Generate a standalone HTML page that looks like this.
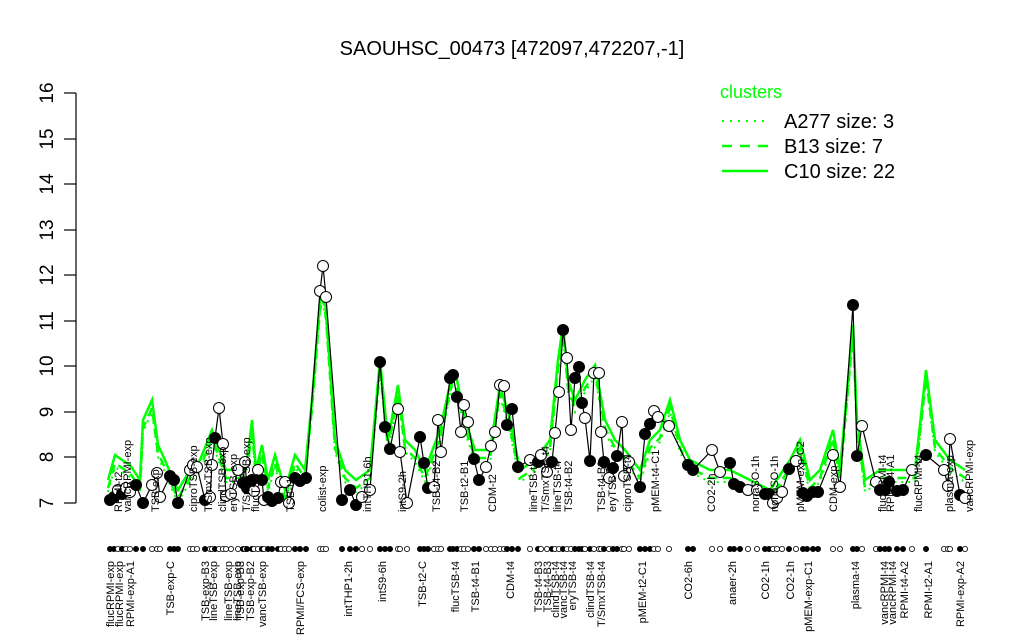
<!DOCTYPE html>
<html><head><meta charset="utf-8"><style>
html,body{margin:0;padding:0;background:#fff;}
svg{display:block;font-family:"Liberation Sans",sans-serif;}
</style></head><body>
<svg id="s" width="1024" height="640" viewBox="0 0 1024 640" xmlns="http://www.w3.org/2000/svg">
<text x="512" y="55" font-size="20" text-anchor="middle">SAOUHSC_00473 [472097,472207,-1]</text>
<g stroke="#000" stroke-width="1.2">
<line x1="76" y1="93" x2="76" y2="503"/>
<line x1="64" y1="93" x2="76" y2="93"/><line x1="64" y1="139" x2="76" y2="139"/><line x1="64" y1="184" x2="76" y2="184"/><line x1="64" y1="230" x2="76" y2="230"/><line x1="64" y1="275" x2="76" y2="275"/><line x1="64" y1="321" x2="76" y2="321"/><line x1="64" y1="366" x2="76" y2="366"/><line x1="64" y1="412" x2="76" y2="412"/><line x1="64" y1="457" x2="76" y2="457"/><line x1="64" y1="503" x2="76" y2="503"/>
</g>
<g font-size="19" text-anchor="middle">
<text transform="translate(46,93) rotate(-90)" dy="7">16</text>
<text transform="translate(46,139) rotate(-90)" dy="7">15</text>
<text transform="translate(46,184) rotate(-90)" dy="7">14</text>
<text transform="translate(46,230) rotate(-90)" dy="7">13</text>
<text transform="translate(46,275) rotate(-90)" dy="7">12</text>
<text transform="translate(46,321) rotate(-90)" dy="7">11</text>
<text transform="translate(46,366) rotate(-90)" dy="7">10</text>
<text transform="translate(46,412) rotate(-90)" dy="7">9</text>
<text transform="translate(46,457) rotate(-90)" dy="7">8</text>
<text transform="translate(46,503) rotate(-90)" dy="7">7</text>
</g>
<g id="g"></g>
<g fill="#0f0" font-size="20">
<text x="720" y="98" font-size="18">clusters</text>
<line x1="722" y1="121" x2="768" y2="121" stroke="#0f0" stroke-width="2" stroke-dasharray="2,6"/>
<line x1="722" y1="146" x2="768" y2="146" stroke="#0f0" stroke-width="2.5" stroke-dasharray="10,8"/>
<line x1="722" y1="171" x2="768" y2="171" stroke="#0f0" stroke-width="2.5"/>
<text x="784" y="128" fill="#000">A277 size: 3</text>
<text x="784" y="153" fill="#000">B13 size: 7</text>
<text x="784" y="178" fill="#000">C10 size: 22</text>
</g>
</svg>
<script>
var B="110,500,1;114,497,1;118,490,0;122,494,1;126,488,0;130,492,0;136,485,1;143,503,1;152,485,0;157,473,0;160,497,0;170,476,1;174,480,1;178,503,1;190,470,0;193,465,0;197,467,0;205,500,1;210,497,0;212,465,0;215,438,1;219,408,0;223,444,0;226,496,0;231,494,0;238,470,0;243,483,1;245,462,0;247,488,1;252,480,1;254,491,0;258,470,0;262,480,1;264,500,0;268,497,1;272,501,1;278,498,1;281,482,0;285,482,0;289,503,0;295,478,1;300,481,1;306,478,1;320,291,0;323,266,0;326,297,0;342,500,1;350,490,1;356,505,1;362,497,0;370,490,0;380,362,1;385,427,1;390,449,1;398,409,0;400,452,0;407,503,0;420,437,1;424,463,1;428,488,1;434,487,0;438,420,0;441,452,0;450,378,1;453,375,1;457,397,1;461,432,0;464,405,0;468,422,0;474,459,1;479,480,1;486,467,0;491,446,0;495,432,0;500,385,0;504,386,0;507,425,1;512,409,1;518,467,1;530,460,0;538,462,1;541,455,0;547,472,0;552,462,1;555,433,0;559,392,0;563,330,1;567,358,0;571,430,0;575,378,1;579,367,1;582,403,1;585,418,0;590,461,1;594,373,0;599,373,0;601,432,0;604,462,1;609,478,0;613,468,1;617,456,1;622,422,0;624,476,0;629,462,0;640,487,1;645,434,1;650,424,1;654,411,0;658,417,0;669,426,0;688,465,1;693,470,1;712,450,0;720,472,0;730,463,1;734,484,1;740,487,1;748,490,0;757,490,0;765,494,1;769,494,1;773,503,0;777,498,0;782,492,0;789,469,1;796,461,0;803,493,1;807,496,1;813,492,1;818,492,1;833,455,0;840,487,0;853,305,1;857,456,1;862,426,0;876,482,0;880,490,1;885,490,1;889,482,1;897,491,1;903,490,1;912,470,0;926,455,1;944,470,0;948,486,0;950,439,0;960,495,1;965,498,0".split(";").map(function(s){return s.split(",").map(Number)});
var G="108,480;115,455;122,460;130,465;140,480;143,420;152,400;158,445;165,460;173,480;178,490;190,470;200,460;212,430;219,450;226,470;240,470;248,455;252,420;256,470;262,445;268,480;275,455;285,490;295,455;305,470;312,400;320,300;323,290;326,310;335,440;345,470;356,480;370,470;380,360;388,440;398,385;405,440;415,450;425,470;440,430;452,375;457,380;465,420;475,450;490,450;500,385;510,420;520,470;535,460;550,440;558,360;563,325;568,380;575,400;585,380;595,365;605,420;615,440;625,450;640,470;650,440;660,430;670,400;680,440;690,460;710,470;730,470;750,480;770,490;790,460;800,440;810,480;820,470;833,430;840,470;853,325;857,420;865,480;880,470;900,470;915,470;926,370;935,440;950,460;965,470";
var g=document.getElementById("g"),h="";
function sh(p,dy){return p.split(";").map(function(s){var a=s.split(",");return a[0]+","+Math.min(505,(+a[1]+dy))}).join(" ")}
h+='<polyline points="'+sh(G,12)+'" fill="none" stroke="#0f0" stroke-width="2" stroke-dasharray="2,5"/>';
h+='<polyline points="'+sh(G,8)+'" fill="none" stroke="#0f0" stroke-width="2.5" stroke-dasharray="9,6"/>';
h+='<polyline points="'+sh(G,0)+'" fill="none" stroke="#0f0" stroke-width="2.5"/>';
h+='<polyline points="'+B.map(function(p){return p[0]+","+p[1]}).join(" ")+'" fill="none" stroke="#000" stroke-width="1.2"/>';
B.forEach(function(p){h+='<circle cx="'+p[0]+'" cy="'+p[1]+'" r="5.5" fill="'+(p[2]?"#000":"#fff")+'" stroke="#000" stroke-width="1"/>';
h+='<circle cx="'+p[0]+'" cy="549" r="2.6" fill="'+(p[2]?"#000":"#fff")+'" stroke="#000" stroke-width="0.8"/>';});
var L=[[110,"flucRPMI-exp"],[119,"flucRPMI-exp"],[130,"RPMI-exp-A1"],[170,"TSB-exp-C"],[205,"TSB-exp-B3"],[213,"lineTSB-exp"],[228,"lineTSB-exp"],[237,"lineTSB-exp"],[240,"TSB-exp-B3"],[250,"TSB-exp-B2"],[262,"vancTSB-exp"],[300,"RPMI/FCS-exp"],[348,"intTHP1-2h"],[382,"intS9-6h"],[422,"TSB-t2-C"],[455,"flucTSB-t4"],[475,"TSB-t4-B1"],[510,"CDM-t4"],[538,"TSB-t4-B3"],[547,"TSB-t4-B3"],[555,"clindTSB-t4"],[563,"vancTSB-t4"],[572,"eryTSB-t4"],[590,"clindTSB-t4"],[601,"T/SmxTSB-t4"],[642,"pMEM-t2-C1"],[688,"CO2-6h"],[732,"anaer-2h"],[765,"CO2-1h"],[790,"CO2-1h"],[808,"pMEM-exp-C1"],[855,"plasma-t4"],[884,"vancRPMI-t4"],[892,"vancRPMI-t4"],[904,"RPMI-t4-A2"],[928,"RPMI-t2-A1"],[960,"RPMI-exp-A2"]];
L.forEach(function(l){h+='<text transform="translate('+(l[0]+4)+',561) rotate(-90)" font-size="11" text-anchor="end">'+l[1]+'</text>';});
var I=[[118,"RPMI-t2"],[127,"vancRPMI-exp"],[155,"TSB-exp"],[193,"ciproTSB-exp"],[208,"T/SmxTSB-exp"],[222,"clindTSB-exp"],[233,"eryTSB-exp"],[246,"T/SmxTSB-exp"],[255,"flucTSB"],[290,"TSB-t1"],[322,"colist-exp"],[367,"intTHP1-6h"],[402,"intS9-2h"],[436,"TSB-t4-B2"],[464,"TSB-t2-B1"],[492,"CDM-t2"],[533,"lineTSB-t4"],[545,"T/SmxTSB-t4"],[557,"lineTSB-t4"],[568,"TSB-t4-B2"],[601,"TSB-t4-B3"],[612,"eryTSB-t4"],[627,"ciproTSB-t4"],[655,"pMEM-t4-C1"],[711,"CO2-2h"],[755,"nonaSO-1h"],[774,"nonaSO-1h"],[800,"pMEM-exp-C2"],[833,"CDM-exp"],[882,"flucRPMI-t4"],[890,"RPMI-t4-A1"],[918,"flucRPMI-t4"],[949,"plasma-exp"],[969,"vancRPMI-exp"]];
I.forEach(function(l){h+='<text transform="translate('+(l[0]+4)+',512) rotate(-90)" font-size="11">'+l[1]+'</text>';});
g.innerHTML=h;
</script>
</body></html>
